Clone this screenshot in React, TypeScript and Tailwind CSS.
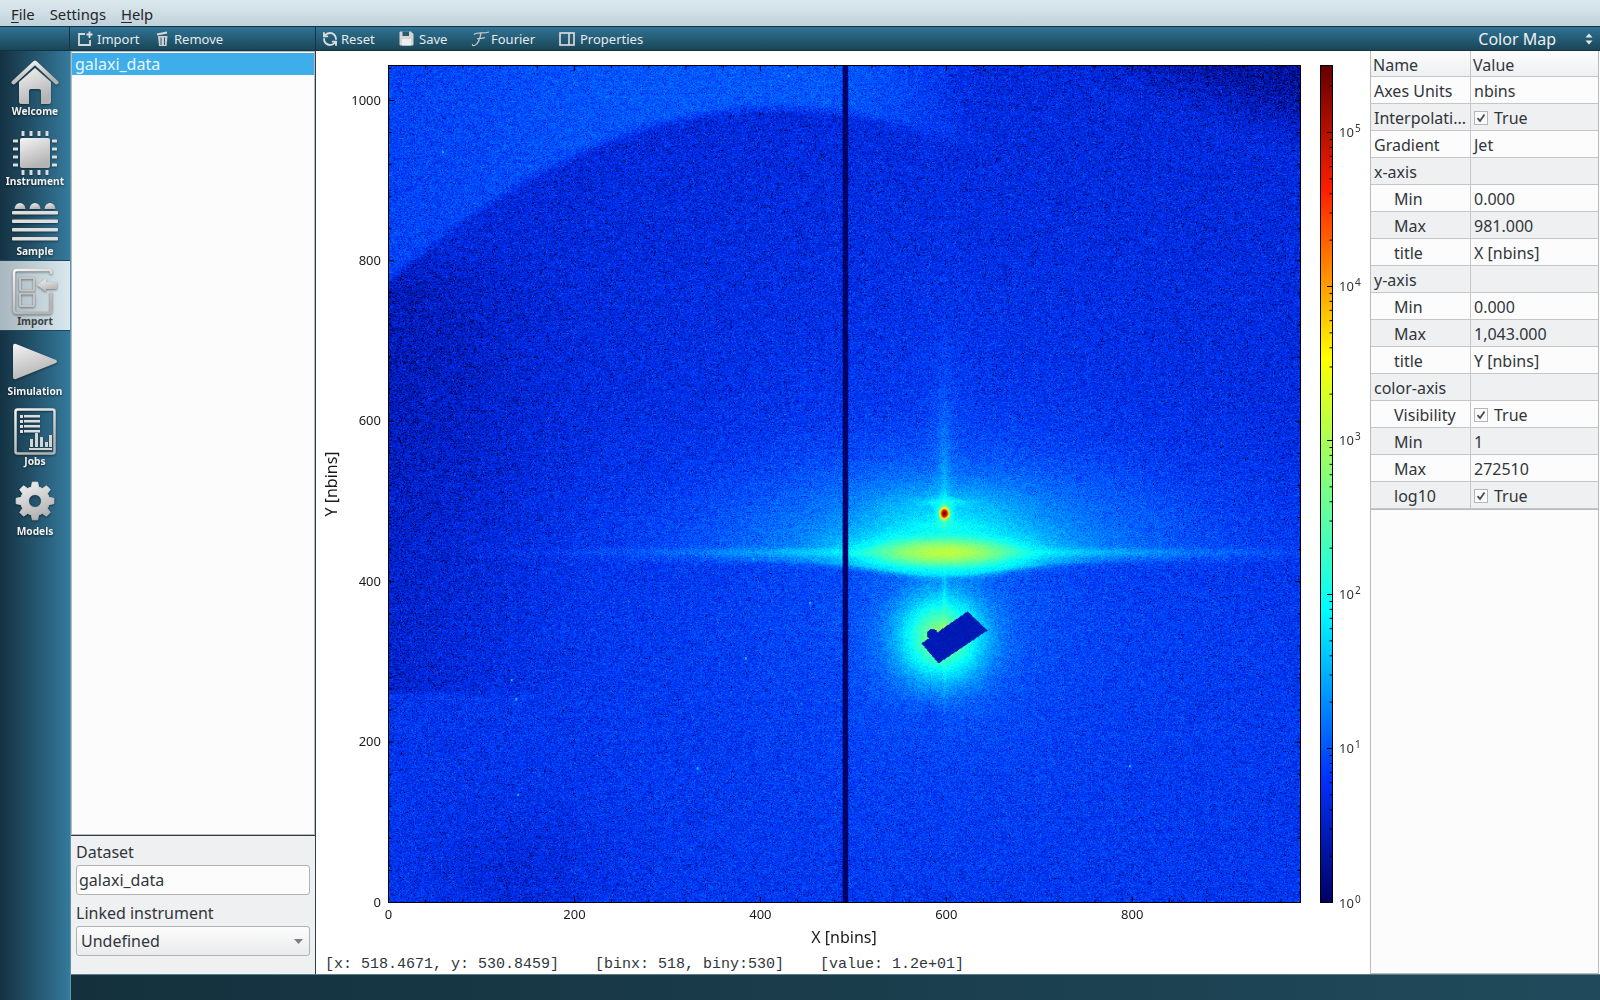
import { useEffect, useRef, type ReactNode } from 'react';
import { RefreshCcw } from 'lucide-react';

const BINS_X = 981;
const BINS_Y = 1043;
const LOG_MAX = 5.435;
const STOPS: [number, number, number, number][] = [
  [0, 0, 0, 100],
  [0.15, 0, 50, 255],
  [0.35, 0, 255, 255],
  [0.65, 255, 255, 0],
  [0.85, 255, 30, 0],
  [1, 100, 0, 0],
];

function jet(t: number): [number, number, number] {
  for (let i = 1; i < STOPS.length; i++) {
    if (t <= STOPS[i][0]) {
      const a = STOPS[i - 1];
      const b = STOPS[i];
      const f = Math.max(0, (t - a[0]) / (b[0] - a[0]));
      return [a[1] + (b[1] - a[1]) * f, a[2] + (b[2] - a[2]) * f, a[3] + (b[3] - a[3]) * f];
    }
  }
  return [100, 0, 0];
}

const sstep = (x: number) => {
  const t = Math.min(1, Math.max(0, x));
  return t * t * (3 - 2 * t);
};

function inStop(u: number, v: number) {
  // beam stop, a tilted rectangle with a small bump on its upper left side
  const pts = [[533, 578], [579, 546], [599, 565], [550, 598]];
  let inside = true;
  for (let i = 0; i < 4; i++) {
    const [x1, y1] = pts[i];
    const [x2, y2] = pts[(i + 1) % 4];
    if ((x2 - x1) * (v - y1) - (y2 - y1) * (u - x1) < 0) inside = false;
  }
  if (inside) return true;
  return Math.hypot(u - 544, v - 569) < 5.5;
}

// expected counts per bin, u and v are canvas pixels
function intensity(u: number, v: number) {
  const arc = 42 + 0.00114 * (u - 390) * (u - 390);
  const up = sstep((arc - v) / 16 + 0.5) * (1 - sstep((u - 440) / 170));
  let lam = 4.8 + 1.5 * sstep((v - 300) / 300);
  lam *= 1 - 0.34 * (1 - sstep(u / 230)) * sstep((v - 170) / 60) * (1 - sstep((v - 622) / 10));
  lam *= 1 - 0.25 * Math.exp(-(((u - 130) / 90) ** 2) - ((v - 810) / 70) ** 2);
  const top = 8 + 2.5 * sstep(u / 260);
  lam += up * (top - lam);
  lam *= 1 - 0.55 * sstep((u - 620) / 250 - v / 90);

  const du = u - 556;
  const dv = v - 487;
  const r = Math.hypot(du, dv);
  lam += 5 * Math.exp(-r / 170);
  lam *= 1 - 0.35 * Math.exp(-(((u - 543) / 13) ** 2) - ((v - 647) / 13) ** 2);

  // main band, sharply cut off on its lower side
  let band =
    1050 * Math.exp(-((du / 44) ** 2) - (dv / 9) ** 2) +
    110 * Math.exp(-Math.abs(du) / 85 - (dv / 4) ** 2) +
    90 * Math.exp(-((du / 78) ** 2) - (dv / 20) ** 2) +
    16 * Math.exp(-((du / 190) ** 2) - (dv / 70) ** 2) +
    32 * Math.exp(-((du / 66) ** 2) - ((v - 458) / 30) ** 2);
  const cut = 495 + 15 * Math.exp(-((du / 85) ** 2));
  if (v > cut) band *= Math.exp(-(v - cut) / 2.5);
  lam += band;

  // spot and its side lobes
  const ds = v - 448;
  lam += 2.7e5 * Math.exp(-((du / 2) ** 2) - (ds / 2.4) ** 2);
  lam += 2500 * Math.exp(-((du / 3.2) ** 2) - (ds / 4.8) ** 2);
  lam += 120 * Math.exp(-((du / 7) ** 2) - (ds / 12) ** 2);
  lam += 32 * Math.exp(-((du / 24) ** 2) - ((v - 437) / 3.5) ** 2);
  lam += 32 * Math.exp(-((du / 28) ** 2) - ((v - 460) / 4) ** 2);

  // vertical streak going up from the spot
  if (ds < 0) {
    const w = 1.4 + -ds / 14;
    lam += 38 * Math.exp(-Math.abs(du) / w) * Math.exp(ds / 48);
  }

  // scatter around the beam stop
  const rb = Math.hypot(u - 553, v - 572);
  lam += 1300 * Math.exp(-rb / 11) + 16 * Math.exp(-rb / 34);
  lam += 200 * Math.exp(-Math.abs(du) / 1.5) * Math.exp(-Math.abs(v - 560) / 19);
  return lam;
}

const HOT: [number, number][] = [
  [364, 493], [421, 537], [357, 592], [127, 633], [123, 614], [309, 702], [741, 700], [129, 729],
  [54, 86], [400, 10],
];

function useHeatmap() {
  const ref = useRef<HTMLCanvasElement>(null);
  useEffect(() => {
    const canvas = ref.current;
    const ctx = canvas?.getContext('2d');
    if (!canvas || !ctx) return;
    const lut: [number, number, number][] = [];
    for (let i = 0; i <= 2048; i++) lut.push(jet(i / 2048));
    let seed = 20240611;
    const rnd = () => {
      seed = (seed + 0x6d2b79f5) | 0;
      let t = Math.imul(seed ^ (seed >>> 15), 1 | seed);
      t = (t + Math.imul(t ^ (t >>> 7), 61 | t)) ^ t;
      return ((t ^ (t >>> 14)) >>> 0) / 4294967296;
    };
    const poisson = (lam: number) => {
      if (lam > 30) {
        const g = Math.sqrt(-2 * Math.log(rnd() + 1e-9)) * Math.cos(6.2832 * rnd());
        return Math.max(1, lam + Math.sqrt(lam) * g);
      }
      const l = Math.exp(-lam);
      let k = 0;
      let p = 1;
      do {
        k++;
        p *= rnd();
      } while (p > l);
      return k - 1;
    };
    const bins = document.createElement('canvas');
    bins.width = BINS_X;
    bins.height = BINS_Y;
    const bctx = bins.getContext('2d')!;
    const img = bctx.createImageData(BINS_X, BINS_Y);
    const sx = 912 / BINS_X;
    const sy = 837 / BINS_Y;
    for (let by = 0; by < BINS_Y; by++) {
      for (let bx = 0; bx < BINS_X; bx++) {
        const u = bx * sx;
        const v = by * sy;
        const i = (by * BINS_X + bx) * 4;
        let count: number;
        if (u >= 454 && u <= 460) count = 1 + (rnd() < 0.12 ? 1 : 0);
        else if (inStop(u, v)) count = 2.2 + rnd();
        else count = poisson(intensity(u, v) * (0.65 + 0.7 * rnd()));
        if (count < 1) {
          img.data[i] = 0;
          img.data[i + 1] = 0;
          img.data[i + 2] = 20;
        } else {
          const c = lut[Math.min(2048, Math.round((Math.log10(count) / LOG_MAX) * 2048))];
          img.data[i] = c[0];
          img.data[i + 1] = c[1];
          img.data[i + 2] = c[2];
        }
        img.data[i + 3] = 255;
      }
    }
    for (const [u, v] of HOT) {
      const bx = Math.round(u / sx);
      const by = Math.round(v / sy);
      for (let a = 0; a < 3; a++) {
        for (let b = 0; b < 2; b++) {
          const i = ((by + a) * BINS_X + bx + b) * 4;
          const c = lut[Math.round((1.6 / LOG_MAX) * 2048)];
          img.data[i] = c[0];
          img.data[i + 1] = c[1];
          img.data[i + 2] = c[2];
        }
      }
    }
    bctx.putImageData(img, 0, 0);
    ctx.imageSmoothingEnabled = true;
    ctx.drawImage(bins, 0, 0, 912, 837);
  }, []);
  return ref;
}

function Grad({ id }: { id: string }) {
  return (
    <defs>
      <linearGradient id={id} x1="0" y1="0" x2="0.4" y2="1">
        <stop offset="0" stopColor="#f4f4f4" />
        <stop offset="1" stopColor="#b4b4b4" />
      </linearGradient>
    </defs>
  );
}

function gearPath(cx: number, cy: number) {
  const pts: string[] = [];
  const teeth = 8;
  for (let i = 0; i < teeth; i++) {
    const a = (i / teeth) * Math.PI * 2;
    const w = Math.PI / teeth;
    const add = (ang: number, r: number) =>
      pts.push(`${(cx + Math.cos(ang) * r).toFixed(2)} ${(cy + Math.sin(ang) * r).toFixed(2)}`);
    add(a - w * 0.62, 14.5);
    add(a - w * 0.36, 19);
    add(a + w * 0.36, 19);
    add(a + w * 0.62, 14.5);
  }
  const hole = `M${cx - 6.5} ${cy}a6.5 6.5 0 1 0 13 0a6.5 6.5 0 1 0 -13 0Z`;
  return `M${pts.join('L')}Z${hole}`;
}

const shadow = 'drop-shadow-[0_1px_1px_rgba(0,0,0,0.45)]';

function HomeIcon() {
  return (
    <svg width="48" height="45" viewBox="0 0 48 45" className={`mt-[9px] ${shadow}`}>
      <Grad id="g-home" />
      <path d="M2.5 22.5 L24 2.5 L45.5 22.5" fill="none" stroke="url(#g-home)" strokeWidth="4" strokeLinecap="round" strokeLinejoin="round" />
      <path d="M8 22 L24 8 L40 22 V42 q0 2 -2 2 H30 V31 q0 -2 -2 -2 H20 q-2 0 -2 2 V44 H10 q-2 0 -2 -2Z" fill="url(#g-home)" />
    </svg>
  );
}

function ChipIcon() {
  const pins = [9, 17, 25, 33];
  return (
    <svg width="44" height="44" viewBox="0 0 44 44" className={`mt-[10px] ${shadow}`}>
      <Grad id="g-chip" />
      <rect x="7" y="7" width="30" height="30" rx="2" fill="url(#g-chip)" />
      {pins.map((p) => (
        <g key={p} fill="#dcdcdc">
          <rect x={p - 0.5} y="0" width="3" height="5" rx="0.5" />
          <rect x={p - 0.5} y="39" width="3" height="5" rx="0.5" />
          <rect x="0" y={p - 0.5} width="5" height="3" rx="0.5" />
          <rect x="39" y={p - 0.5} width="5" height="3" rx="0.5" />
        </g>
      ))}
    </svg>
  );
}

function SampleIcon() {
  return (
    <svg width="46" height="40" viewBox="0 0 46 40" className={`mt-[11px] ${shadow}`}>
      <Grad id="g-sample" />
      {[8, 23, 38].map((x) => (
        <path key={x} d={`M${x - 5.5} 7 a5.5 6 0 0 1 11 0Z`} fill="url(#g-sample)" />
      ))}
      {[9, 17.5, 26, 35].map((y) => (
        <rect key={y} x="0" y={y} width="46" height="3.5" rx="1" fill="#dedede" />
      ))}
    </svg>
  );
}

function ImportNavIcon() {
  return (
    <svg width="46" height="47" viewBox="0 0 46 47" className={`mt-[7px] ${shadow}`}>
      <Grad id="g-import" />
      <path d="M39 6 V4 q0 -2 -2 -2 H5 q-3 0 -3 3 V42 q0 3 3 3 H37 q2 0 2 -2 V24" fill="none" stroke="url(#g-import)" strokeWidth="2.5" />
      <rect x="8" y="10" width="14" height="12.5" rx="1" fill="none" stroke="#c4c4c4" strokeWidth="2" />
      <rect x="8" y="25.5" width="14" height="12.5" rx="1" fill="none" stroke="#c4c4c4" strokeWidth="2" />
      <path d="M25 17 L34 10.5 V14 H45 V21 H34 V24Z" fill="url(#g-import)" />
    </svg>
  );
}

function PlayIcon() {
  return (
    <svg width="46" height="37" viewBox="0 0 46 37" className={`mt-[12px] ${shadow}`}>
      <Grad id="g-play" />
      <path d="M1 3 Q1 0 4 1 L44 17 Q46 18.5 44 20 L4 36 Q1 37 1 34Z" fill="url(#g-play)" />
    </svg>
  );
}

function JobsIcon() {
  return (
    <svg width="42" height="47" viewBox="0 0 42 47" className={`mt-[7px] ${shadow}`}>
      <Grad id="g-jobs" />
      <rect x="1.5" y="1.5" width="39" height="44" rx="2" fill="none" stroke="url(#g-jobs)" strokeWidth="2.5" />
      {[7, 12, 17, 22].map((y) => (
        <g key={y} fill="#dedede">
          <rect x="6" y={y} width="3" height="3" />
          <rect x="10" y={y} width="16" height="2.5" />
        </g>
      ))}
      <g fill="#d4d4d4">
        <rect x="16" y="31" width="3" height="8" />
        <rect x="21" y="25" width="3" height="14" />
        <rect x="26" y="29" width="3" height="10" />
        <rect x="31" y="34" width="3" height="5" />
        <rect x="35" y="27" width="3" height="12" />
        <rect x="15" y="40" width="23" height="2" />
      </g>
    </svg>
  );
}

function GearIcon() {
  return (
    <svg width="40" height="40" viewBox="0 0 40 40" className={`mt-[10px] ${shadow}`}>
      <Grad id="g-gear" />
      <path d={gearPath(20, 20)} fill="url(#g-gear)" fillRule="evenodd" strokeLinejoin="round" stroke="url(#g-gear)" strokeWidth="1" />
    </svg>
  );
}

const navItems: { label: string; icon: ReactNode; active?: boolean }[] = [
  { label: 'Welcome', icon: <HomeIcon /> },
  { label: 'Instrument', icon: <ChipIcon /> },
  { label: 'Sample', icon: <SampleIcon /> },
  { label: 'Import', icon: <ImportNavIcon />, active: true },
  { label: 'Simulation', icon: <PlayIcon /> },
  { label: 'Jobs', icon: <JobsIcon /> },
  { label: 'Models', icon: <GearIcon /> },
];

function ToolButton({ icon, label, className }: { icon: ReactNode; label: string; className: string }) {
  return (
    <div className={`flex items-center text-[13px] leading-[25px] text-[#e4eaee] ${className}`}>
      {icon}
      <span className="translate-y-px">{label}</span>
    </div>
  );
}

type Row = { name: string; value?: string; check?: boolean; indent?: boolean };

const rows: Row[] = [
  { name: 'Axes Units', value: 'nbins' },
  { name: 'Interpolati...', value: 'True', check: true },
  { name: 'Gradient', value: 'Jet' },
  { name: 'x-axis' },
  { name: 'Min', value: '0.000', indent: true },
  { name: 'Max', value: '981.000', indent: true },
  { name: 'title', value: 'X [nbins]', indent: true },
  { name: 'y-axis' },
  { name: 'Min', value: '0.000', indent: true },
  { name: 'Max', value: '1,043.000', indent: true },
  { name: 'title', value: 'Y [nbins]', indent: true },
  { name: 'color-axis' },
  { name: 'Visibility', value: 'True', check: true, indent: true },
  { name: 'Min', value: '1', indent: true },
  { name: 'Max', value: '272510', indent: true },
  { name: 'log10', value: 'True', check: true, indent: true },
];

function PropertyTable() {
  return (
    <div className="flex w-[229px] flex-col border-x border-b border-[#b8babc] bg-[#fcfcfc] text-[16px] text-[#31363b]">
      <div className="grid h-[26px] grid-cols-[100px_1fr] border-b border-[#c4c6c8] bg-gradient-to-b from-[#fcfcfc] to-[#eff0f1] leading-[28px]">
        <div className="border-r border-[#c4c6c8] pl-[2px]">Name</div>
        <div className="pl-[2px]">Value</div>
      </div>
      <div className="border-b border-[#c4c6c8]">
        {rows.map((row, i) => (
          <div
            key={i}
            className={`grid h-[27px] grid-cols-[100px_1fr] border-b border-[#c4c6c8] leading-[28px] last:h-[26px] last:border-b-0 ${i % 2 === 1 ? 'bg-[#eff0f1]' : 'bg-[#fcfcfc]'}`}
          >
            <div className={`border-r border-[#c4c6c8] whitespace-nowrap overflow-hidden ${row.indent ? 'pl-[23px]' : 'pl-[3px]'}`}>{row.name}</div>
            <div className="flex items-center pl-[3px]">
              {row.check && (
                <span className="mr-[6px] flex h-[14px] w-[14px] items-center justify-center border border-[#b4b6b8] bg-[#fcfcfc]">
                  <svg width="10" height="10" viewBox="0 0 10 10">
                    <path d="M1.5 5.2 L4 8 L8.5 1.5" fill="none" stroke="#4d5257" strokeWidth="1.9" />
                  </svg>
                </span>
              )}
              {row.value}
            </div>
          </div>
        ))}
      </div>
    </div>
  );
}

const xTicks = Array.from({ length: 25 }, (_, i) => i * 40);
const yTicks = Array.from({ length: 27 }, (_, i) => i * 40);
const cbarTicks: { t: number; major: boolean }[] = [];
for (let d = 0; d < 6; d++) {
  for (let m = 1; m < 10; m++) {
    const t = (d + Math.log10(m)) / LOG_MAX;
    if (t <= 1) cbarTicks.push({ t, major: m === 1 });
  }
}

function PlotAxes() {
  const px = (v: number) => 72.5 + v * 0.9297;
  const py = (v: number) => 851.5 - v * 0.802;
  return (
    <svg width="1054" height="905" className="absolute inset-0 text-[13px]">
      <defs>
        <linearGradient id="jet" x1="0" y1="1" x2="0" y2="0">
          {STOPS.map(([o, r, g, b]) => (
            <stop key={o} offset={o} stopColor={`rgb(${r},${g},${b})`} />
          ))}
        </linearGradient>
      </defs>
      <rect x="72.5" y="14.5" width="912" height="837" fill="none" stroke="#000" />
      {xTicks.map((v) => {
        const len = v % 200 === 0 ? 5 : 2.5;
        return (
          <g key={v} stroke="#000">
            <line x1={px(v)} x2={px(v)} y1={851} y2={851 - len} />
            <line x1={px(v)} x2={px(v)} y1={15} y2={15 + len} />
          </g>
        );
      })}
      {yTicks.map((v) => {
        const len = v % 200 === 0 ? 5 : 2.5;
        return (
          <g key={v} stroke="#000">
            <line x1={73} x2={73 + len} y1={py(v)} y2={py(v)} />
            <line x1={984} x2={984 - len} y1={py(v)} y2={py(v)} />
          </g>
        );
      })}
      {[0, 200, 400, 600, 800].map((v) => (
        <text key={v} x={px(v)} y={868} textAnchor="middle" fill="#1a1a1a">{v}</text>
      ))}
      {[0, 200, 400, 600, 800, 1000].map((v) => (
        <text key={v} x={65} y={py(v) + 4} textAnchor="end" fill="#1a1a1a">{v}</text>
      ))}
      <text x={528} y={892} textAnchor="middle" fill="#1a1a1a" className="text-[16px]">X [nbins]</text>
      <text transform="translate(21 433) rotate(-90)" textAnchor="middle" fill="#1a1a1a" className="text-[16px]">Y [nbins]</text>

      <rect x="1004.5" y="14.5" width="12" height="837" fill="url(#jet)" stroke="#000" />
      {cbarTicks.map(({ t, major }) => {
        const y = 851.5 - t * 837;
        return <line key={t} x1={1016} x2={major ? 1011 : 1013.5} y1={y} y2={y} stroke="#000" />;
      })}
      {[0, 1, 2, 3, 4, 5].map((d) => (
        <text key={d} x={1023} y={851.5 - (d / LOG_MAX) * 837 + 5} fill="#333">
          10<tspan dy="-5" dx="1" className="text-[10px]">{d}</tspan>
        </text>
      ))}
    </svg>
  );
}

export default function App() {
  const canvasRef = useHeatmap();

  return (
    <div className="flex h-[1000px] w-[1600px] flex-col overflow-hidden bg-[#14303d] font-['Noto_Sans',sans-serif]">
      {/* menu bar */}
      <div className="flex h-[26px] items-center bg-gradient-to-b from-[#dde9ef] to-[#c2d2da] pt-[2px] pl-[11px] text-[14.8px] text-[#232629]">
        <span className="mr-[15px]"><span className="underline underline-offset-2">F</span>ile</span>
        <span className="mr-[15px]">Settings</span>
        <span><span className="underline underline-offset-2">H</span>elp</span>
      </div>

      {/* toolbars */}
      <div className="flex h-[25px] border-y border-[#163342] bg-gradient-to-b from-[#2f7495] to-[#1a4657]">
        <div className="w-[70px] border-r border-[#163342]" />
        <div className="flex w-[246px] items-center border-r border-[#163342] pl-[7px]">
          <ToolButton
            label="Import"
            className="w-[79px]"
            icon={
              <svg width="16" height="16" viewBox="0 0 16 16" className="mr-[4px]">
                <path d="M8 3 H2 V14 H13 V9" fill="none" stroke="#d8d8d8" strokeWidth="1.8" />
                <path d="M12.5 0.5 V7 M9.5 3.5 H15.5" stroke="#e0e0e0" strokeWidth="1.8" />
              </svg>
            }
          />
          <ToolButton
            label="Remove"
            className=""
            icon={
              <svg width="13" height="16" viewBox="0 0 13 16" className="mr-[5px]">
                <path d="M1 3.5 L11 1.5" stroke="#d8d8d8" strokeWidth="1.8" />
                <path d="M2 5 H11.5 L10.5 15 H3Z" fill="#cfcfcf" />
                <path d="M5 6.5 V14 M8.5 6.5 V14" stroke="#2a5a70" strokeWidth="1" />
              </svg>
            }
          />
        </div>
        <div className="flex flex-1 items-center pl-[6px]">
          <ToolButton label="Reset" className="w-[77px]" icon={<RefreshCcw size={16} strokeWidth={2.8} className="mr-[3px] text-[#dcdcdc]" />} />
          <ToolButton
            label="Save"
            className="w-[72px]"
            icon={
              <svg width="15" height="15" viewBox="0 0 15 15" className="mr-[5px]">
                <path d="M0.5 1.5 Q0.5 0.5 1.5 0.5 H12 L14.5 3 V13.5 Q14.5 14.5 13.5 14.5 H1.5 Q0.5 14.5 0.5 13.5Z" fill="#d4d4d4" />
                <rect x="3.5" y="0.5" width="6.5" height="4.5" fill="#2a5a70" />
                <rect x="3" y="8" width="9" height="6.5" fill="#eeeeee" />
              </svg>
            }
          />
          <ToolButton
            label="Fourier"
            className="w-[88px]"
            icon={
              <svg width="19" height="16" viewBox="0 0 19 16" className="mr-[1px]">
                <path d="M3 3.5 C6 0.5 12 3 18 1 M10 2 C9 7 8 13 3.5 14.5 C2 15 1 14 1.5 13 M6 8 C8 7 11 8 14 6.5" fill="none" stroke="#c8c8c8" strokeWidth="1.2" />
              </svg>
            }
          />
          <ToolButton
            label="Properties"
            className=""
            icon={
              <svg width="16" height="14" viewBox="0 0 16 14" className="mr-[5px]">
                <rect x="1" y="1" width="14" height="12" fill="none" stroke="#d8d8d8" strokeWidth="1.7" />
                <path d="M10 1 V13" stroke="#d8d8d8" strokeWidth="1.7" />
              </svg>
            }
          />
          <div className="ml-auto flex items-center pr-[7px] text-[16px] text-[#eff0f1]">
            <span className="mr-[29px]">Color Map</span>
            <svg width="8" height="12" viewBox="0 0 8 12" fill="#e8e8e8">
              <path d="M4 0.5 L7.5 4.5 H0.5Z M4 11.5 L7.5 7.5 H0.5Z" />
            </svg>
          </div>
        </div>
      </div>

      <div className="flex min-h-0 flex-1">
        {/* side navigation */}
        <div className="flex w-[71px] flex-col border-r border-[#5f96ad] bg-gradient-to-r from-[#143243] to-[#357a9c]">
          {navItems.map((item) => (
            <div
              key={item.label}
              className={`-mt-px flex h-[71px] flex-col items-center border-y ${item.active ? 'border-[#1c4a5c] bg-gradient-to-r from-[#a8b6bd] to-[#d9e7ee]' : 'border-transparent'}`}
            >
              <div className="flex h-[53px] w-full justify-center">{item.icon}</div>
              <span className={`text-[10.2px] leading-[14px] font-bold ${item.active ? 'text-[#3a3f44]' : 'text-[#f2f2f2] drop-shadow-[0_1px_1px_rgba(0,0,0,0.6)]'}`}>
                {item.label}
              </span>
            </div>
          ))}
        </div>

        <div className="flex min-w-0 flex-1 flex-col">
          <div className="flex min-h-0 flex-1">
            {/* data list */}
            <div className="flex w-[245px] flex-col border-r border-[#2a3f4a] bg-[#eff0f1]">
              <div className="flex-1 border border-[#b8babc] bg-[#fcfcfc] text-[16px]">
                <div className="mt-px h-[22px] bg-[#3daee9] pl-[3px] leading-[22px] text-[#eaf6fd]">galaxi_data</div>
              </div>
              <div className="h-[139px] border-t border-[#2a3f4a] px-[5px] pt-[5px] text-[16px] text-[#31363b]">
                <div className="leading-[22px]">Dataset</div>
                <div className="mt-[2px] h-[30px] rounded-[3px] border border-[#b0b2b4] bg-[#fcfcfc] pl-[2px] leading-[28px]">galaxi_data</div>
                <div className="mt-[5px] leading-[26px]">Linked instrument</div>
                <div className="flex h-[30px] items-center justify-between rounded-[3px] border border-[#b0b2b4] bg-gradient-to-b from-[#fcfcfc] to-[#eaebec] pr-[6px] pl-[4px]">
                  <span>Undefined</span>
                  <svg width="9" height="5" viewBox="0 0 9 5" fill="#7b7e82">
                    <path d="M0 0 H9 L4.5 5Z" />
                  </svg>
                </div>
              </div>
            </div>

            {/* plot */}
            <div className="flex w-[1054px] flex-col bg-white">
              <div className="relative h-[905px]">
                <canvas ref={canvasRef} width={912} height={837} className="absolute top-[14px] left-[72px] h-[837px] w-[912px]" />
                <PlotAxes />
              </div>
              <div className="pl-[9px] font-['Liberation_Mono',monospace] text-[15px] leading-[18px] whitespace-pre text-[#31363b]">
                {'[x: 518.4671, y: 530.8459]    [binx: 518, biny:530]    [value: 1.2e+01]'}
              </div>
            </div>

            {/* properties */}
            <div className="flex min-w-0 flex-1 flex-col bg-[#fcfcfc]">
              <PropertyTable />
              <div className="w-[229px] flex-1 border-x border-b border-[#b8babc]" />
            </div>
          </div>
          {/* status bar */}
          <div className="h-[26px] border-t border-[#5c7c88] bg-gradient-to-r from-[#14303d] to-[#204a5b]" />
        </div>
      </div>
    </div>
  );
}
